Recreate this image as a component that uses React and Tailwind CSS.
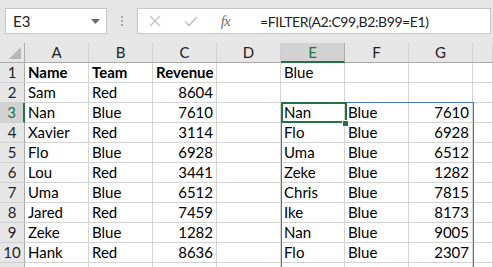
import React from "react";

const cols = ["A", "B", "C", "D", "E", "F", "G", ""];

const source = [
  ["Name", "Team", "Revenue"],
  ["Sam", "Red", 8604],
  ["Nan", "Blue", 7610],
  ["Xavier", "Red", 3114],
  ["Flo", "Blue", 6928],
  ["Lou", "Red", 3441],
  ["Uma", "Blue", 6512],
  ["Jared", "Red", 7459],
  ["Zeke", "Blue", 1282],
  ["Hank", "Red", 8636],
];

const spill = [
  ["Nan", "Blue", 7610],
  ["Flo", "Blue", 6928],
  ["Uma", "Blue", 6512],
  ["Zeke", "Blue", 1282],
  ["Chris", "Blue", 7815],
  ["Ike", "Blue", 8173],
  ["Nan", "Blue", 9005],
  ["Flo", "Blue", 2307],
];

function buildRows() {
  const rows = [];
  for (let r = 0; r < 11; r++) {
    const row = ["", "", "", "", "", "", "", ""];
    if (source[r]) {
      row[0] = source[r][0];
      row[1] = source[r][1];
      row[2] = source[r][2];
    }
    if (r === 0) row[4] = "Blue";
    if (r >= 2 && spill[r - 2]) {
      row[4] = spill[r - 2][0];
      row[5] = spill[r - 2][1];
      row[6] = spill[r - 2][2];
    }
    rows.push(row);
  }
  return rows;
}

function Cell({ value, bold }) {
  const isNum = typeof value === "number";
  return (
    <div
      className={`h-[20px] border-r border-b border-[#d4d4d4] bg-white flex items-center overflow-hidden whitespace-nowrap text-[15px] text-black ${
        isNum ? "justify-end pr-[3px]" : "pl-[3px]"
      } ${bold ? "font-bold" : ""}`}
    >
      {value}
    </div>
  );
}

export default function App() {
  const rows = buildRows();

  return (
    <div className="w-[493px] h-[267px] overflow-hidden bg-[#e6e6e6] font-['Lato','Liberation_Sans',sans-serif]">
      {/* Formula bar */}
      <div className="h-[43px] flex items-start pt-[8px] pl-[5px]">
        <div className="w-[102px] h-[26px] bg-white border border-[#c6c6c6] flex items-center justify-between pl-[7px] pr-[6px] text-[15px] text-[#222]">
          <span>E3</span>
          <svg width="9" height="5" viewBox="0 0 9 5">
            <path d="M0 0h9L4.5 5z" fill="#6a6a6a" />
          </svg>
        </div>
        <div className="w-[30px] h-[26px] flex flex-col items-center justify-center gap-[2px]">
          <span className="w-[2px] h-[2px] bg-[#a6a6a6]" />
          <span className="w-[2px] h-[2px] bg-[#a6a6a6]" />
          <span className="w-[2px] h-[2px] bg-[#a6a6a6]" />
        </div>
        <div className="w-[354px] h-[26px] bg-white border border-[#c6c6c6] flex items-center">
          <div className="w-[103px] flex items-center justify-around shrink-0">
            <svg width="12" height="12" viewBox="0 0 12 12">
              <path d="M1 1l10 10M11 1L1 11" stroke="#c2c2c2" strokeWidth="1.4" />
            </svg>
            <svg width="14" height="11" viewBox="0 0 14 11">
              <path d="M1 5.5l4 4L13 1" stroke="#c2c2c2" strokeWidth="1.6" fill="none" />
            </svg>
            <span className="text-[15px] italic text-[#6e6e6e] font-['Liberation_Serif',serif] tracking-[-1px]">
              fx
            </span>
          </div>
          <div className="h-full flex items-center pl-[19px] text-[14px] tracking-[-0.4px] text-[#222] whitespace-nowrap">
            =FILTER(A2:C99,B2:B99=E1)
          </div>
        </div>
      </div>

      {/* Grid */}
      <div className="relative">
        <div className="grid grid-cols-[25px_64px_64px_64px_64px_64px_64px_64px_1fr]">
          {/* Corner */}
          <div className="h-[20px] bg-[#e6e6e6] border-r border-b border-[#ababab] flex items-end justify-end pr-[3px] pb-[3px]">
            <svg width="12" height="12" viewBox="0 0 12 12">
              <path d="M12 0v12H0z" fill="#b5b5b5" />
            </svg>
          </div>
          {cols.map((c, i) => (
            <div
              key={c + i}
              className={`h-[20px] border-r flex items-center justify-center text-[15px] ${
                c === "E"
                  ? "bg-[#d2d2d2] border-[#ababab] border-b-2 border-b-[#217346] text-[#217346]"
                  : "bg-[#e6e6e6] border-[#d0d0d0] border-b border-b-[#ababab] text-[#222]"
              }`}
            >
              {c}
            </div>
          ))}

          {rows.map((row, r) => (
            <React.Fragment key={r}>
              <div
                className={`h-[20px] border-b border-[#d0d0d0] flex items-center justify-center text-[15px] ${
                  r === 2
                    ? "bg-[#d2d2d2] border-r-2 border-r-[#217346] text-[#217346]"
                    : "bg-[#e6e6e6] border-r border-r-[#ababab] text-[#222]"
                }`}
              >
                {r < 10 ? r + 1 : ""}
              </div>
              {row.map((v, c) => (
                <Cell key={c} value={v} bold={r === 0 && c < 3} />
              ))}
            </React.Fragment>
          ))}
        </div>

        {/* Spill range border */}
        <div className="absolute left-[281px] top-[59px] w-[193px] h-[200px] border border-[#4a74c6] pointer-events-none" />
        {/* Active cell */}
        <div className="absolute left-[281px] top-[59px] w-[66px] h-[21px] border-2 border-[#217346] pointer-events-none" />
        <div className="absolute left-[342px] top-[77px] w-[7px] h-[7px] bg-[#217346] border border-white pointer-events-none" />
      </div>
    </div>
  );
}
